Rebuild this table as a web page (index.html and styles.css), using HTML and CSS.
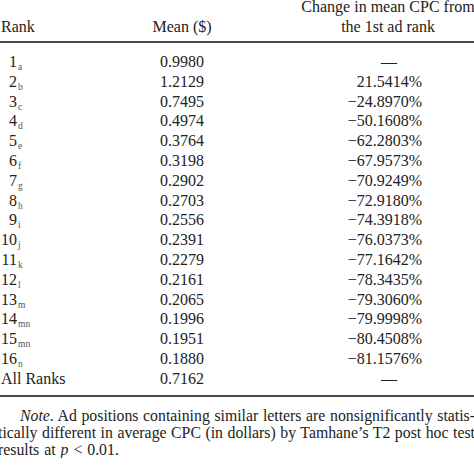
FILE: index.html
```html
<!DOCTYPE html>
<html lang="en">
<head>
<meta charset="utf-8">
<title>Mean CPC by ad rank</title>
<link rel="stylesheet" href="styles.css">
</head>
<body>
<div class="page">
  <div class="table">
    <div class="head">
      <div class="c1 hcell">Rank</div>
      <div class="c2 hcell">Mean ($)</div>
      <div class="c3 hcell">Change in mean CPC from<br>the 1st ad rank</div>
    </div>
    <div class="body">
      <div class="row"><div class="c1"><span class="num">1</span><sub>a</sub></div><div class="c2">0.9980</div><div class="c3 dash">—</div></div>
      <div class="row"><div class="c1"><span class="num">2</span><sub>b</sub></div><div class="c2">1.2129</div><div class="c3 val">21.5414%</div></div>
      <div class="row"><div class="c1"><span class="num">3</span><sub>c</sub></div><div class="c2">0.7495</div><div class="c3 val">−24.8970%</div></div>
      <div class="row"><div class="c1"><span class="num">4</span><sub>d</sub></div><div class="c2">0.4974</div><div class="c3 val">−50.1608%</div></div>
      <div class="row"><div class="c1"><span class="num">5</span><sub>e</sub></div><div class="c2">0.3764</div><div class="c3 val">−62.2803%</div></div>
      <div class="row"><div class="c1"><span class="num">6</span><sub>f</sub></div><div class="c2">0.3198</div><div class="c3 val">−67.9573%</div></div>
      <div class="row"><div class="c1"><span class="num">7</span><sub>g</sub></div><div class="c2">0.2902</div><div class="c3 val">−70.9249%</div></div>
      <div class="row"><div class="c1"><span class="num">8</span><sub>h</sub></div><div class="c2">0.2703</div><div class="c3 val">−72.9180%</div></div>
      <div class="row"><div class="c1"><span class="num">9</span><sub>i</sub></div><div class="c2">0.2556</div><div class="c3 val">−74.3918%</div></div>
      <div class="row"><div class="c1"><span class="num">10</span><sub>j</sub></div><div class="c2">0.2391</div><div class="c3 val">−76.0373%</div></div>
      <div class="row"><div class="c1"><span class="num">11</span><sub>k</sub></div><div class="c2">0.2279</div><div class="c3 val">−77.1642%</div></div>
      <div class="row"><div class="c1"><span class="num">12</span><sub>l</sub></div><div class="c2">0.2161</div><div class="c3 val">−78.3435%</div></div>
      <div class="row"><div class="c1"><span class="num">13</span><sub>m</sub></div><div class="c2">0.2065</div><div class="c3 val">−79.3060%</div></div>
      <div class="row"><div class="c1"><span class="num">14</span><sub>mn</sub></div><div class="c2">0.1996</div><div class="c3 val">−79.9998%</div></div>
      <div class="row"><div class="c1"><span class="num">15</span><sub>mn</sub></div><div class="c2">0.1951</div><div class="c3 val">−80.4508%</div></div>
      <div class="row"><div class="c1"><span class="num">16</span><sub>n</sub></div><div class="c2">0.1880</div><div class="c3 val">−81.1576%</div></div>
      <div class="row"><div class="c1">All Ranks</div><div class="c2">0.7162</div><div class="c3 dash">—</div></div>
    </div>
  </div>
  <div class="note">
    <span class="line just first"><i>Note</i>. Ad positions containing similar letters are nonsignificantly statis-</span>
    <span class="line just">tically different in average CPC (in dollars) by Tamhane’s T2 post hoc test</span>
    <span class="line last">results at <i>p</i> &lt; 0.01.</span>
  </div>
</div>
</body>
</html>
```
FILE: styles.css
```css
html, body {
  margin: 0;
  padding: 0;
  overflow: hidden;
  background: #fff;
}
body {
  font-family: "Liberation Serif", "Times New Roman", serif;
  color: #222;
}
.page {
  width: 476px;
  margin-top: -3px;
}
.table {
  font-size: 16px;
}
.head {
  display: grid;
  grid-template-columns: 120px 124px 232px;
  align-items: end;
  line-height: 19.5px;
  padding-bottom: 5px;
  border-bottom: 2px solid #4a4a4a;
}
.body {
  padding-top: 9px;
  padding-bottom: 6px;
  border-bottom: 2px solid #4a4a4a;
}
.row {
  display: grid;
  grid-template-columns: 120px 124px 232px;
  line-height: 19.8px;
  height: 19.8px;
}
.c1 {
  padding-left: 1px;
  white-space: nowrap;
}
.c2 {
  text-align: center;
}
.c3 {
  padding-left: 56px;
  text-align: center;
  white-space: nowrap;
}
.c3.val {
  text-align: right;
  padding-right: 54px;
}
.c3.dash {
  padding-left: 58px;
}
.num {
  display: inline-block;
  width: 16px;
  text-align: right;
}
sub {
  font-size: 9.5px;
  color: #555;
  vertical-align: -3px;
  line-height: 0;
  margin-left: 1px;
}
.note {
  margin-left: -2px;
  width: 477px;
  margin-top: 10px;
  font-size: 15.8px;
  line-height: 17px;
}
.line {
  display: block;
  white-space: nowrap;
}
.line.just {
  text-align: justify;
  text-align-last: justify;
  white-space: normal;
}
.line.first {
  padding-left: 22px;
}
.line.last {
  word-spacing: 1px;
}
```
